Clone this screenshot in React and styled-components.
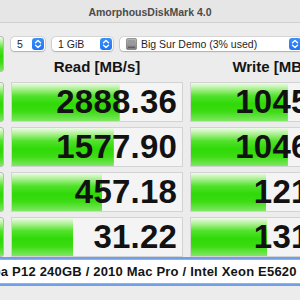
import styled, { createGlobalStyle } from "styled-components";

const GlobalStyle = createGlobalStyle`
  html, body {
    margin: 0;
    background: #ececec;
    overflow: hidden;
  }
  * {
    box-sizing: border-box;
  }
`;

const results = [
  { read: "2888.36", readFill: 63.4, write: "1045.92", writeFill: 57 },
  { read: "1577.90", readFill: 59.9, write: "1046.51", writeFill: 57 },
  { read: "457.18", readFill: 53, write: "121.40", writeFill: 44.2 },
  { read: "31.22", readFill: 36, write: "131.07", writeFill: 44.8 },
];

const GREEN =
  "linear-gradient(to bottom, #eefbe9 0%, #b3f29b 14%, #52e22c 34%, #2fd906 55%, #3ddc14 75%, #7fe763 100%)";

function Stepper() {
  return (
    <StepperBox>
      <svg width="8" height="10" viewBox="0 0 8 10">
        <path
          d="M1.5 3.8 L4 1.5 L6.5 3.8 M1.5 6.2 L4 8.5 L6.5 6.2"
          fill="none"
          stroke="#fff"
          strokeWidth="1.4"
          strokeLinecap="round"
          strokeLinejoin="round"
        />
      </svg>
    </StepperBox>
  );
}

function DiskIcon() {
  return (
    <svg width="11" height="12" viewBox="0 0 11 12">
      <defs>
        <linearGradient id="disk" x1="0" y1="0" x2="0" y2="1">
          <stop offset="0" stopColor="#b9b9b9" />
          <stop offset="1" stopColor="#7d7d7d" />
        </linearGradient>
      </defs>
      <rect x="0.5" y="0.5" width="10" height="11" rx="1.2" fill="url(#disk)" stroke="#666" strokeWidth="0.6" />
      <rect x="2" y="2" width="7" height="5" rx="0.6" fill="#9a9a9a" />
      <rect x="2" y="8.6" width="7" height="1.4" fill="#5f5f5f" />
    </svg>
  );
}

function App() {
  return (
    <>
      <GlobalStyle />
      <Viewport>
        <Window>
          <TitleBar>AmorphousDiskMark 4.0</TitleBar>
          <Content>
            <TopGrid>
              <AllButton>All</AllButton>
              <Toolbar>
                <Popup $width={34}>
                  <PopupLabel>5</PopupLabel>
                  <Stepper />
                </Popup>
                <Popup $width={61}>
                  <PopupLabel>1 GiB</PopupLabel>
                  <Stepper />
                </Popup>
                <Popup $width={182}>
                  <PopupLabel>
                    <DiskIcon />
                    Big Sur Demo (3% used)
                  </PopupLabel>
                  <Stepper />
                </Popup>
                <Popup $width={53}>
                  <PopupLabel>MB/s</PopupLabel>
                  <Stepper />
                </Popup>
              </Toolbar>
              <Header $col={2}>Read [MB/s]</Header>
              <Header $col={3}>Write [MB/s]</Header>
            </TopGrid>
            <ResultsGrid>
              {results.map((r, i) => (
                <Row key={i}>
                  <TestButton>{["SEQ1M", "SEQ128K", "RND4K", "RND4K"][i]}</TestButton>
                  <ValueCell style={{ backgroundSize: `${r.readFill}% 100%` }}>{r.read}</ValueCell>
                  <ValueCell style={{ backgroundSize: `${r.writeFill}% 100%` }}>{r.write}</ValueCell>
                </Row>
              ))}
            </ResultsGrid>
            <CommentField>Toshiba P12 240GB / 2010 Mac Pro / Intel Xeon E5620</CommentField>
          </Content>
        </Window>
      </Viewport>
    </>
  );
}

const Viewport = styled.div`
  width: 300px;
  height: 300px;
  overflow: hidden;
  background: #ececec;
`;

const Window = styled.div`
  width: 448px;
  margin-left: -74px;
  font-family: "Liberation Sans", Arial, sans-serif;
`;

const TitleBar = styled.div`
  height: 23px;
  display: flex;
  align-items: center;
  justify-content: center;
  background: #e6e6e6;
  border-bottom: 1px solid #d0d0d0;
  color: #4b4b4b;
  font-size: 10.5px;
  font-weight: bold;
  padding-top: 1px;
`;

const Content = styled.div`
  padding: 13px 12px 0 12px;
`;

const columns = `
  display: grid;
  grid-template-columns: 66px 172px 172px;
  column-gap: 7px;
`;

const TopGrid = styled.div`
  ${columns}
  grid-template-rows: 16px 20px;
`;

const greenButton = `
  background: ${GREEN};
  border: 1px solid #b9b9b9;
  border-radius: 3px;
  display: flex;
  align-items: center;
  justify-content: center;
  font-weight: bold;
  font-size: 14px;
  color: #111;
`;

const AllButton = styled.div`
  ${greenButton}
  grid-row: 1 / span 2;
  grid-column: 1;
`;

const Toolbar = styled.div`
  grid-column: 2 / span 2;
  grid-row: 1;
  display: flex;
  gap: 7px;
  align-items: center;
`;

const Popup = styled.div`
  width: ${(p) => p.$width}px;
  height: 14px;
  flex: none;
  display: flex;
  align-items: center;
  justify-content: space-between;
  background: #fff;
  border-radius: 3.5px;
  box-shadow: 0 0 0 0.5px rgba(0, 0, 0, 0.18), 0 1px 1.5px rgba(0, 0, 0, 0.18);
  padding: 0 1px 0 6px;
`;

const PopupLabel = styled.span`
  display: flex;
  align-items: center;
  gap: 4px;
  font-size: 10.5px;
  color: #1e1e1e;
  white-space: nowrap;
`;

const StepperBox = styled.span`
  width: 12px;
  height: 12px;
  border-radius: 3px;
  background: linear-gradient(to bottom, #3d8ffb, #1f74f2);
  display: flex;
  align-items: center;
  justify-content: center;
`;

const Header = styled.div`
  grid-row: 2;
  grid-column: ${(p) => p.$col};
  align-self: end;
  text-align: center;
  font-size: 15px;
  line-height: 15px;
  font-weight: bold;
  color: #141414;
  margin-bottom: -2px;
`;

const ResultsGrid = styled.div`
  display: flex;
  flex-direction: column;
  gap: 8px;
  margin-top: 10px;
`;

const Row = styled.div`
  ${columns}
  height: 37px;
`;

const TestButton = styled.div`
  ${greenButton}
  font-size: 12px;
`;

const ValueCell = styled.div`
  background-color: #f4f4f4;
  background-image: ${GREEN};
  background-repeat: no-repeat;
  border: 1px solid #d3d3d3;
  display: flex;
  align-items: center;
  justify-content: flex-end;
  padding-right: 5px;
  font-size: 33px;
  font-weight: bold;
  color: #121212;
  letter-spacing: 0.2px;
`;

const CommentField = styled.div`
  margin-top: 5px;
  height: 25px;
  background: #fff;
  border: 1px solid #8eb4ec;
  box-shadow: 0 0 0 2px #6f9fe6;
  border-radius: 2px;
  display: flex;
  align-items: center;
  padding-left: 19px;
  font-size: 13px;
  font-weight: bold;
  letter-spacing: 0.2px;
  color: #141414;
  white-space: nowrap;
  overflow: hidden;
`;

export default App;
